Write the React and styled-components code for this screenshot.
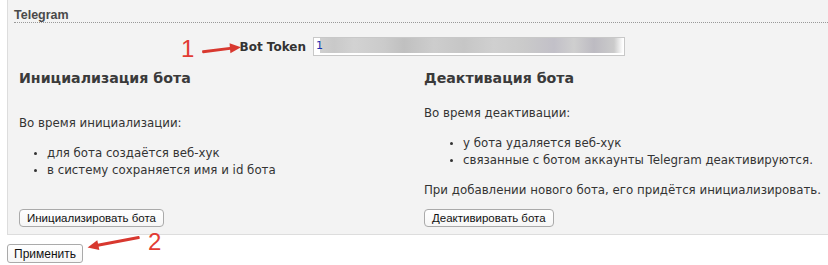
import styled, { createGlobalStyle } from "styled-components";

const GlobalStyle = createGlobalStyle`
  html, body {
    margin: 0;
    padding: 0;
    background: #fff;
  }
  body {
    font-family: "DejaVu Sans", Verdana, sans-serif;
    color: #333;
  }
`;

const Page = styled.div`
  position: relative;
  width: 828px;
  height: 265px;
  overflow: hidden;
  padding-left: 7px;
  box-sizing: border-box;
`;

const Panel = styled.div`
  background: #f3f3f3;
  border-left: 1px solid #ddd;
  border-bottom: 1px solid #ddd;
  height: 235px;
  box-sizing: border-box;
  display: flex;
  flex-direction: column;
`;

const Legend = styled.div`
  margin-left: 6px;
  padding-top: 8px;
  height: 17px;
  font-family: "Liberation Sans", Arial, sans-serif;
  font-size: 12.5px;
  font-weight: bold;
  color: #4a4a4a;
  border-bottom: 1px dotted #999;
`;

const TokenRow = styled.div`
  display: flex;
  align-items: center;
  margin-top: 14px;
  height: 20px;
`;

const TokenLabel = styled.label`
  width: 298px;
  text-align: right;
  font-size: 12px;
  font-weight: bold;
  color: #333;
  padding-right: 7px;
`;

const TokenInput = styled.div`
  width: 312px;
  height: 19px;
  box-sizing: border-box;
  border: 1px solid #c8c8c8;
  background:
    linear-gradient(to bottom, transparent 0, transparent 2px, rgba(255,255,255,0) 2px, rgba(255,255,255,0) 15px, #fff 15px),
    linear-gradient(to right, #fff 0, #fff 6px, #cfcfcf 6px, #c9c9c9 20px, #d2d2d2 40px, #cbcbcb 70px, #c0c0c0 90px, #cdcdcd 120px, #c6c6c6 150px, #d0d0d0 180px, #cacaca 210px, #c2c0c8 240px, #cfcfcf 260px, #bdbbc2 280px, #cbcbcb 300px, #fff 309px);
  font-family: "DejaVu Sans", sans-serif;
  font-size: 11px;
  color: #1a2fb0;
  padding-left: 2px;
  line-height: 16px;
`;

const Columns = styled.div`
  display: grid;
  grid-template-columns: 405px 1fr;
  padding-left: 11px;
  flex: 1;
  padding-bottom: 9px;
`;

const Column = styled.div`
  display: flex;
  flex-direction: column;
`;

const Heading = styled.h3`
  margin: 12px 0 0;
  font-size: 14.2px;
  font-weight: bold;
  color: #3a3a3a;
  line-height: 20px;
`;

const Text = styled.p`
  margin: ${(p) => p.$top}px 0 0;
  font-size: 11.8px;
  line-height: 17px;
  color: #333;
`;

const List = styled.ul`
  margin: 13px 0 0;
  padding-left: ${(p) => p.$indent}px;
  font-size: 11.8px;
  line-height: 17px;
  color: #333;
  li::marker {
    font-size: 10px;
  }
`;

const Button = styled.button`
  font-family: "Liberation Sans", Arial, sans-serif;
  font-size: 11.5px;
  color: #111;
  background: linear-gradient(#fff, #f6f6f6);
  border: 1px solid #aaa;
  border-radius: 4px;
  height: 18px;
  padding: 0 7px;
  line-height: 16px;
  align-self: flex-start;
  margin-top: ${(p) => (p.$top ? `${p.$top}px` : "auto")};
`;

const ApplyButton = styled(Button)`
  margin-top: 9px;
  font-size: 12px;
  border-radius: 3px;
  height: 19px;
  padding: 0 6px;
`;

const Marker = styled.div`
  position: absolute;
  left: ${(p) => p.$x}px;
  top: ${(p) => p.$y}px;
  display: flex;
  align-items: center;
  gap: 8px;
`;

const Num = styled.span`
  font-family: "Liberation Sans", Arial, sans-serif;
  font-size: 24px;
  color: #e23b33;
  line-height: 24px;
`;

const Arrow = ({ w, flip }) => (
  <svg width={w} height="16" viewBox={`0 0 ${w} 16`} style={{ transform: flip ? "scaleX(-1) rotate(12deg)" : "rotate(-5deg)" }}>
    <path d={`M1 9 L${w - 10} 8`} stroke="#d8382f" strokeWidth="3" strokeLinecap="round" fill="none" />
    <path d={`M${w - 12} 3 L${w - 1} 8 L${w - 12} 13 Z`} fill="#d8382f" />
  </svg>
);

export default function App() {
  return (
    <Page>
      <GlobalStyle />
      <Panel>
        <Legend>Telegram</Legend>
        <TokenRow>
          <TokenLabel>Bot Token</TokenLabel>
          <TokenInput>1</TokenInput>
        </TokenRow>
        <Columns>
          <Column>
            <Heading>Инициализация бота</Heading>
            <Text $top={27}>Во время инициализации:</Text>
            <List $indent={28}>
              <li>для бота создаётся веб-хук</li>
              <li>в систему сохраняется имя и id бота</li>
            </List>
            <Button>Инициализировать бота</Button>
          </Column>
          <Column>
            <Heading>Деактивация бота</Heading>
            <Text $top={17}>Во время деактивации:</Text>
            <List $indent={39}>
              <li>у бота удаляется веб-хук</li>
              <li>связанные с ботом аккаунты Telegram деактивируются.</li>
            </List>
            <Text $top={13}>При добавлении нового бота, его придётся инициализировать.</Text>
            <Button $top={10}>Деактивировать бота</Button>
          </Column>
        </Columns>
      </Panel>
      <ApplyButton>Применить</ApplyButton>
      <Marker $x={181} $y={37}>
        <Num>1</Num>
        <Arrow w={40} />
      </Marker>
      <Marker $x={86} $y={230}>
        <Arrow w={54} flip />
        <Num>2</Num>
      </Marker>
    </Page>
  );
}
